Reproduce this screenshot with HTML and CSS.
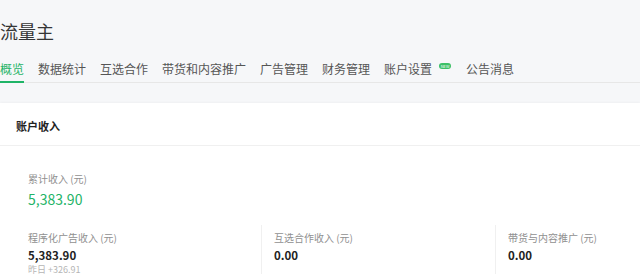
FILE: index.html
```html
<!DOCTYPE html>
<html lang="zh-CN">

<head>
    <meta charset="UTF-8">
    <meta name="viewport" content="width=device-width, initial-scale=1.0">
    <title>流量主</title>
    <link rel="stylesheet" href="styles.css">
</head>

<body>
    <div class="page">
        <h1 class="title">流量主</h1>
        <nav class="tabs">
            <a class="tab active">概览</a>
            <a class="tab">数据统计</a>
            <a class="tab">互选合作</a>
            <a class="tab">带货和内容推广</a>
            <a class="tab">广告管理</a>
            <a class="tab">财务管理</a>
            <a class="tab">账户设置<span class="badge">NEW</span></a>
            <a class="tab">公告消息</a>
        </nav>

        <div class="card">
            <div class="card-head">账户收入</div>
            <div class="card-body">
                <div class="total">
                    <p class="label">累计收入 (元)</p>
                    <p class="big">5,383.90</p>
                </div>
                <div class="cols">
                    <div class="col">
                        <p class="label">程序化广告收入 (元)</p>
                        <p class="value">5,383.90</p>
                        <p class="sub">昨日 +326.91</p>
                    </div>
                    <div class="col">
                        <p class="label">互选合作收入 (元)</p>
                        <p class="value">0.00</p>
                    </div>
                    <div class="col">
                        <p class="label">带货与内容推广 (元)</p>
                        <p class="value">0.00</p>
                    </div>
                </div>
            </div>
        </div>
    </div>
</body>

</html>
```

FILE: styles.css
```css
body {
    margin: 0;
    background-color: #f6f7f9;
    font-family: "Noto Sans CJK SC", "Noto Sans", sans-serif;
    color: #333;
    overflow: hidden;
}

p {
    margin: 0;
}

.title {
    margin: 0;
    padding-top: 19px;
    font-size: 18px;
    line-height: 24px;
    font-weight: 400;
    color: #353535;
}

.tabs {
    display: flex;
    margin-top: 16px;
    border-bottom: 1px solid #e7e7e7;

    .tab {
        display: flex;
        align-items: center;
        margin-right: 14px;
        padding-bottom: 2px;
        font-size: 12px;
        line-height: 20px;
        color: #555;
        border-bottom: 2px solid transparent;
        margin-bottom: -1px;
    }

    .tab:nth-child(7) {
        margin-right: 15px;
    }

    .active {
        color: #1fb467;
        border-bottom-color: #1fb467;
    }

    .badge {
        display: inline-block;
        margin-left: 7px;
        margin-top: -6px;
        width: 12px;
        height: 6px;
        border-radius: 3px;
        background-color: #3cc067;
        color: #fff;
        font-size: 4px;
        line-height: 6px;
        text-align: center;
        overflow: hidden;
    }
}

.card {
    margin-top: 20px;
    background-color: #fff;
    box-shadow: 0 0 3px rgba(0, 0, 0, 0.06);
}

.card-head {
    padding: 13px 16px 9px;
    font-size: 11px;
    line-height: 20px;
    font-weight: bold;
    color: #222;
    border-bottom: 1px solid #f0f0f0;
}

.card-body {
    padding: 25px 16px 0;
}

.label {
    font-size: 10px;
    line-height: 16px;
    color: #909090;
}

.total {
    padding-left: 12px;

    .big {
        margin-top: 1px;
        font-size: 14px;
        line-height: 22px;
        color: #1fb467;
    }
}

.cols {
    display: grid;
    grid-template-columns: 245px 234px 1fr;
    margin-top: 15px;

    .col {
        padding: 5px 12px 0;
    }

    .col + .col {
        border-left: 1px solid #f0f0f0;
    }

    .value {
        margin-top: 1px;
        font-size: 11.5px;
        line-height: 16px;
        font-weight: bold;
        color: #222;
    }

    .sub {
        font-size: 9px;
        line-height: 14px;
        color: #b5b5b5;
    }
}
```
